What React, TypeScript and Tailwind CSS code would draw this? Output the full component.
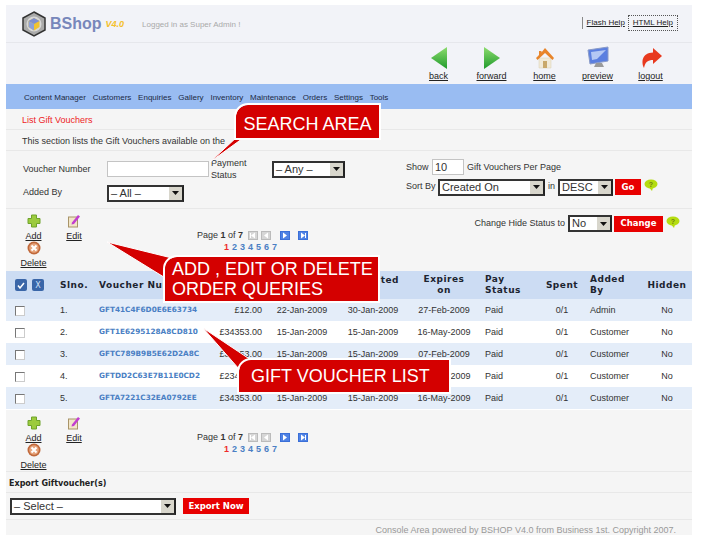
import React from "react";

const rows = [
  ["1.", "GFT41C4F6D0E6E63734", "£12.00", "22-Jan-2009", "30-Jan-2009", "27-Feb-2009", "Paid", "0/1", "Admin", "No"],
  ["2.", "GFT1E6295128A8CD810", "£34353.00", "15-Jan-2009", "15-Jan-2009", "16-May-2009", "Paid", "0/1", "Customer", "No"],
  ["3.", "GFTC789B9B5E62D2A8C", "£34353.00", "15-Jan-2009", "15-Jan-2009", "07-Feb-2009", "Paid", "0/1", "Customer", "No"],
  ["4.", "GFTDD2C63E7B11E0CD2", "£23453.00", "15-Jan-2009", "15-Jan-2009", "16-May-2009", "Paid", "0/1", "Customer", "No"],
  ["5.", "GFTA7221C32EA0792EE", "£34353.00", "15-Jan-2009", "15-Jan-2009", "16-May-2009", "Paid", "0/1", "Customer", "No"],
];

const cols = "grid grid-cols-[44px_49px_112px_51px_80px_62px_80px_56px_44px_58px_50px] items-center";

function FakeSelect({ label, className }: { label: string; className: string }) {
  return (
    <div className={`flex h-[17px] items-center justify-between border-2 border-[#333] border-r-[#222] bg-white ${className}`}>
      <span className="whitespace-nowrap pl-[2px] text-[11px] leading-none text-[#333]">{label}</span>
      <span className="flex h-full w-[13px] shrink-0 items-center justify-center bg-[#d8d6cc]">
        <svg width="7" height="4" viewBox="0 0 7 4"><path d="M0 0h7L3.500 4z" fill="#111" /></svg>
      </span>
    </div>
  );
}

function Help() {
  return (
    <svg width="14" height="12" viewBox="0 0 14 12">
      <ellipse cx="7" cy="5" rx="6.500" ry="4.500" fill="#b5dc10" />
      <path d="M5 8.500 8 12l1-3.500z" fill="#b5dc10" />
      <text x="7" y="7.500" textAnchor="middle" fontSize="7" fontWeight="700" fill="#6d7f10" fontFamily="Liberation Sans">?</text>
    </svg>
  );
}

function Pager({ kind }: { kind: "first" | "prev" | "next" | "last" }) {
  const on = kind === "next" || kind === "last";
  const bar = kind === "first" ? "M2 2h1v5H2z" : kind === "last" ? "M7 2h1v5H7z" : "";
  const tri = on ? "M3 1.500 7 4.500 3 7.500z" : "M7 1.500 3 4.500 7 7.500z";
  return (
    <svg width="10" height="9" viewBox="0 0 10 9">
      <rect width="10" height="9" fill={on ? "#3a6fd8" : "#bbb"} />
      <rect x="1" y="1" width="8" height="7" fill={on ? "#4f82e4" : "#d6d6d6"} />
      <path d={tri} fill="#fff" />
      {bar && <path d={bar} fill="#fff" />}
    </svg>
  );
}

function Actions() {
  return (
    <div className="flex h-full">
      <div className="w-[54px] pl-[14px] text-center text-[9px] text-[#222]">
        <div className="flex w-[27px] flex-col items-center">
          <svg width="14" height="14" viewBox="0 0 14 14">
            <path d="M4.500 1h5v3.500H13v5H9.500V13h-5V9.500H1v-5h3.500z" fill="#9ccb3e" stroke="#6fa32c" />
          </svg>
          <span className="mt-[3px] leading-[11px] underline">Add</span>
          <svg className="-mt-[1px]" width="14" height="14" viewBox="0 0 14 14">
            <circle cx="7" cy="7" r="6.500" fill="#c0683a" />
            <circle cx="7" cy="7" r="4.800" fill="#e6a47c" />
            <path d="M4.500 4.500l5 5m0-5l-5 5" stroke="#fff" strokeWidth="2" />
          </svg>
          <span className="mt-[3px] leading-[11px] underline">Delete</span>
        </div>
      </div>
      <div className="flex w-[28px] flex-col items-center text-[9px] text-[#222]">
        <svg width="12" height="14" viewBox="0 0 12 14">
          <rect x="0.500" y="3" width="9" height="10" fill="#f2e6c8" stroke="#a89468" />
          <path d="M4 8.500 10 1l2 1.500L6 10l-2.500.5z" fill="#c23fd0" />
        </svg>
        <span className="mt-[3px] leading-[11px] underline">Edit</span>
      </div>
      <div className="ml-[109px] w-[120px] pt-[15px] text-center text-[9px] text-[#333]">
        <div className="flex items-center gap-[3px] whitespace-nowrap">
          <span className="mr-[2px]">Page <b>1</b> of <b>7</b></span>
          <Pager kind="first" />
          <Pager kind="prev" />
          <span className="ml-[6px]"><Pager kind="next" /></span>
          <span className="ml-[5px]"><Pager kind="last" /></span>
        </div>
        <div className="-mt-[1px] flex justify-center gap-[3px] pr-[13px] font-bold leading-[10px] text-[#4a7fc4]">
          <span className="text-[#ee2a2a]">1</span><span>2</span><span>3</span><span>4</span><span>5</span><span>6</span><span>7</span>
        </div>
      </div>
    </div>
  );
}

function NavIcon({ label, children }: { label: string; children: React.ReactNode }) {
  return (
    <div className="flex w-[53px] flex-col items-center text-[9px] text-[#222]">
      <div className="flex h-[25px] items-center">{children}</div>
      <span className="mt-[1px] leading-[10px] underline">{label}</span>
    </div>
  );
}

function RedButton({ label, className }: { label: string; className: string }) {
  return (
    <span className={`flex h-4 items-center justify-center whitespace-nowrap bg-[#e80000] text-[8.500px] font-bold text-white [font-family:'DejaVu_Sans',sans-serif] ${className}`}>
      {label}
    </span>
  );
}

export default function App() {
  return (
    <div className="relative h-[535px] w-[702px] overflow-hidden bg-white [font-family:'Liberation_Sans',Arial,sans-serif]">
      <div className="ml-[6px] mt-[5px] w-[686px]">
        {/* Header */}
        <div className="flex h-[38px] items-center border-b border-[#e6e7ec] bg-[#f2f3f8]">
          <div className="ml-[16px] flex items-center">
            <svg width="24" height="26" viewBox="0 0 24 26">
              <path d="M12 1 23 7v12l-11 6-11-6V7z" fill="#aaa" stroke="#333" strokeWidth="1.500" />
              <circle cx="12" cy="13" r="7.500" fill="#d8d8d8" />
              <path d="M12 7l5.500 3v6L12 19.500 6.500 16v-6z" fill="#f0c330" />
              <path d="M12 7l5.500 3-5.500 3-5.500-3z" fill="#7e8fd0" />
              <path d="M12 13v6.500L6.500 16v-6z" fill="#8da0d8" />
            </svg>
            <span className="ml-[4px] text-[16px] font-bold leading-none text-[#7887bb]">BShop</span>
            <span className="ml-[4px] mt-[3px] text-[9px] font-bold italic text-[#f4c02c]">V4.0</span>
            <span className="ml-[18px] mt-[3px] text-[8px] text-[#a9a9a9]">Logged in as Super Admin !</span>
          </div>
          <div className="ml-auto mr-[14px] mt-[-2px] flex items-center text-[8px] text-[#222]">
            <span className="border-l border-[#888] pl-[4px] leading-[12px] underline">Flash Help</span>
            <span className="ml-[3px] border border-dotted border-[#555] px-[4px] py-[1px] leading-[12px] underline">HTML Help</span>
          </div>
        </div>

        {/* Nav icons */}
        <div className="flex h-[41px] justify-end bg-[#f2f3f8] pr-[15px] pt-[2px]">
          <NavIcon label="back">
            <svg width="18" height="24" viewBox="0 0 18 24">
              <defs><linearGradient id="gb" x1="0" y1="0" x2="0" y2="1"><stop offset="0" stopColor="#8ddc6e" /><stop offset="1" stopColor="#1f9a2c" /></linearGradient></defs>
              <path d="M17 1v22L1 12z" fill="url(#gb)" />
            </svg>
          </NavIcon>
          <NavIcon label="forward">
            <svg width="18" height="24" viewBox="0 0 18 24"><path d="M1 1v22l16-11z" fill="url(#gb)" /></svg>
          </NavIcon>
          <NavIcon label="home">
            <svg width="18" height="22" viewBox="0 0 18 22">
              <path d="M3 11h12v10H3z" fill="#f1ead8" stroke="#d8ccb0" strokeWidth="0.500" />
              <path d="M7 14h4v7H7z" fill="#c9a86a" />
              <path d="M9 1 18 11l-1.500 2L9 6l-7.500 7L0 11l3-3V4h2.500v1.500z" fill="#e8842a" />
            </svg>
          </NavIcon>
          <NavIcon label="preview">
            <svg width="22" height="24" viewBox="0 0 22 24">
              <path d="M1 4 21 1v14L3 18z" fill="#5b7fe0" stroke="#8a9bc8" />
              <path d="M4 6l15-2-9 9-5 1z" fill="#b4c8f4" />
              <path d="M9 17h6l2 4H7z" fill="#9a9a9a" />
            </svg>
          </NavIcon>
          <NavIcon label="logout">
            <svg width="22" height="20" viewBox="0 0 22 20">
              <path d="M13 0l9 8-9 8v-4C8 12 5 14 4 20 1 14 2 5 13 4.500z" fill="#e8391e" />
            </svg>
          </NavIcon>
        </div>

        {/* Menu */}
        <div className="flex h-[25px] items-center gap-[6.800px] bg-[#99bcf2] pl-[18px] pt-[2px] text-[8px] text-[#1c2a44]">
          {["Content Manager", "Customers", "Enquiries", "Gallery", "Inventory", "Maintenance", "Orders", "Settings", "Tools"].map((m) => (
            <span key={m}>{m}</span>
          ))}
        </div>

        <div className="bg-[#f5f5f5]">
          <div className="flex h-[21px] items-center border-b border-[#e8e8e8] pl-[16px] pt-[3px] text-[9px] text-[#ee1c25]">List Gift Vouchers</div>
          <div className="flex h-[21px] items-center border-b border-[#e8e8e8] pl-[16px] pt-[3px] text-[9px] text-[#333]">
            This section lists the Gift Vouchers available on the
          </div>

          {/* Filters */}
          <div className="flex h-[58px] border-b border-[#e8e8e8] text-[9px] text-[#333]">
            <div className="w-[400px] pl-[17px] pt-[10px]">
              <div className="flex h-[16px] items-center">
                <span className="w-[84px] pt-[2px]">Voucher Number</span>
                <span className="h-4 w-[102px] border border-[#c4c4c4] bg-white" />
                <span className="ml-[2px] w-[61px] leading-[12px]">Payment Status</span>
                <FakeSelect label="– Any –" className="w-[73px]" />
              </div>
              <div className="mt-[8px] flex h-[16px] items-center">
                <span className="w-[84px]">Added By</span>
                <FakeSelect label="– All –" className="w-[77px]" />
              </div>
            </div>
            <div className="pt-[8px]">
              <div className="flex h-[16px] items-center">
                <span className="w-[26px] pt-[1px]">Show</span>
                <span className="flex h-4 w-[32px] items-center border border-[#c4c4c4] bg-white pl-[2px] text-[11px]">10</span>
                <span className="ml-[3px] pt-[1px]">Gift Vouchers Per Page</span>
              </div>
              <div className="mt-[4px] flex h-[16px] items-center">
                <span className="w-[32px]">Sort By</span>
                <FakeSelect label="Created On" className="w-[107px]" />
                <span className="mx-[3px]">in</span>
                <FakeSelect label="DESC" className="w-[55px]" />
                <RedButton label="Go" className="ml-[2px] w-[26px]" />
                <span className="ml-[3px] -mt-[4px]"><Help /></span>
              </div>
            </div>
          </div>

          {/* Actions top */}
          <div className="relative h-[62px] pt-[5px]">
            <Actions />
            <div className="absolute right-[12px] top-[6px] flex items-center text-[9px] text-[#333]">
              <span className="mr-[3px]">Change Hide Status to</span>
              <FakeSelect label="No" className="w-[44px]" />
              <RedButton label="Change" className="ml-[2px] w-[49px]" />
              <span className="ml-[3px] -mt-[4px]"><Help /></span>
            </div>
          </div>
        </div>

        {/* Table */}
        <div className={`${cols} h-[28px] bg-[#ccdcf3] text-[9px] font-bold leading-[11px] tracking-[0.5px] text-[#1c2430] [font-family:'DejaVu_Sans',sans-serif]`}>
          <div className="flex gap-[5px] pl-[9px]">
            <span className="flex h-3 w-3 items-center justify-center rounded-[2px] bg-[#3a66a8]">
              <svg width="8" height="7" viewBox="0 0 8 7"><path d="M1 3.500 3 6l4-5" stroke="#fff" strokeWidth="1.500" fill="none" /></svg>
            </span>
            <span className="flex h-3 w-3 items-center justify-center rounded-[2px] bg-[#3a66a8] text-[8px] font-normal tracking-normal text-[#cfe0f8]">X</span>
          </div>
          <div className="pl-[10px]">Slno.</div>
          <div className="col-span-2 whitespace-nowrap">Voucher Number</div>
          <div />
          <div className="flex justify-end self-start whitespace-nowrap pr-[5px] pt-[4px]">Date Created</div>
          <div className="text-center">Expires<br />on</div>
          <div className="pl-[1px]">Pay<br />Status</div>
          <div className="text-center">Spent</div>
          <div className="pl-[6px]">Added<br />By</div>
          <div className="text-center">Hidden</div>
        </div>
        {rows.map((r, i) => (
          <div key={r[0]} className={`${cols} h-[22px] pt-[1px] text-[9px] text-[#333] ${i % 2 === 0 ? "bg-[#e4edf9]" : "bg-white"}`}>
            <div className="pl-[9px]"><span className="block h-[10px] w-[10px] border border-[#777] border-b-[#ccc] border-r-[#ccc] bg-white" /></div>
            <div className="pl-[10px]">{r[0]}</div>
            <div className="text-[7.300px] font-bold text-[#4a7fc4] [font-family:'DejaVu_Sans',sans-serif]">{r[1]}</div>
            <div className="text-right">{r[2]}</div>
            <div className="text-center">{r[3]}</div>
            <div className="text-center">{r[4]}</div>
            <div className="text-center">{r[5]}</div>
            <div className="pl-[1px]">{r[6]}</div>
            <div className="text-center">{r[7]}</div>
            <div className="pl-[6px]">{r[8]}</div>
            <div className="text-center">{r[9]}</div>
          </div>
        ))}

        <div className="mt-[1px] bg-[#f5f5f5]">
          <div className="h-[62px] border-b border-[#e8e8e8] pt-[6px]">
            <Actions />
          </div>
          <div className="flex h-[21px] items-center border-b border-[#e8e8e8] pl-[3px] pt-[4px] text-[8px] font-bold text-[#222] [font-family:'DejaVu_Sans',sans-serif]">
            Export Giftvoucher(s)
          </div>
          <div className="flex h-[27px] items-center border-b border-[#e8e8e8] pl-[4px]">
            <FakeSelect label="– Select –" className="w-[166px]" />
            <RedButton label="Export Now" className="ml-[7px] w-[66px]" />
          </div>
          <div className="flex h-[15px] items-center justify-end pr-[16px] pt-[6px] text-[9px] leading-none text-[#999]">
            Console Area powered by BSHOP V4.0 from Business 1st. Copyright 2007.
          </div>
        </div>
      </div>

      {/* Annotation callouts */}
      <svg className="absolute left-0 top-0" width="702" height="535" viewBox="0 0 702 535">
        <path d="M246 136 210 162 238 136z" fill="#d40000" stroke="#fff" strokeWidth="1" />
        <path d="M107 242 172 258 167 279z" fill="#d40000" stroke="#fff" strokeWidth="1" />
        <path d="M203 328 254 362 239 369z" fill="#d40000" stroke="#fff" strokeWidth="1" />
      </svg>
      <div className="absolute left-[236px] top-[105px] flex h-[33px] w-[143px] items-center justify-center rounded-tl-[12px] bg-[#d40000] pt-[4px] text-[18px] leading-none text-white outline-2 outline-white">
        SEARCH AREA
      </div>
      <div className="absolute left-[165px] top-[257px] h-[44px] w-[213px] rounded-tl-[12px] bg-[#d40000] pl-[7px] pt-[2px] text-[18px] leading-[20px] text-white outline-2 outline-white">
        ADD , EDIT OR DELETE<br />ORDER QUERIES
      </div>
      <div className="absolute left-[239px] top-[360px] flex h-[32px] w-[210px] items-center rounded-tl-[12px] bg-[#d40000] pl-[12px] text-[18px] leading-none text-white outline-2 outline-white">
        GIFT VOUCHER LIST
      </div>
    </div>
  );
}
